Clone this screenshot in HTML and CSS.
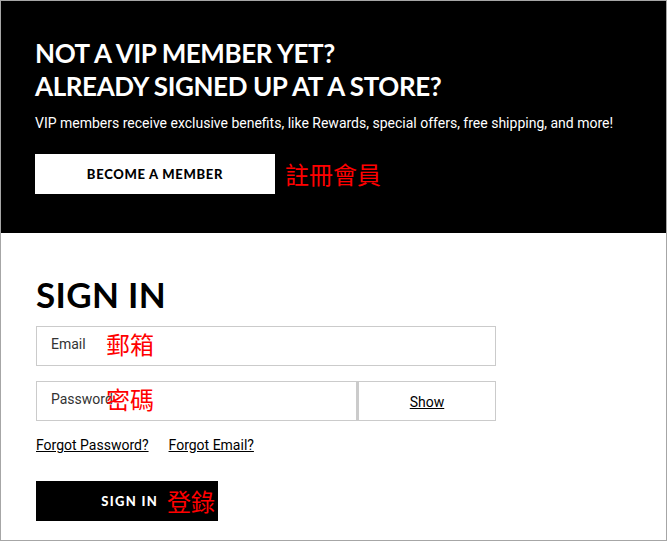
FILE: index.html
```html
<!doctype html>
<html>

<head>
    <meta charset="UTF-8" />
    <meta name="viewport" content="width=device-width, initial-scale=1.0" />
    <link rel="stylesheet" href="styles.css">
</head>

<body>
    <div class="frame">
        <section class="promo">
            <h2 class="promo__title">NOT A VIP MEMBER YET?<br>ALREADY SIGNED UP AT A STORE?</h2>
            <p class="promo__text">VIP members receive exclusive benefits, like Rewards, special offers, free shipping, and more!</p>
            <div class="promo__actions">
                <button class="btn btn--light">BECOME A MEMBER</button>
                <span class="note note--inline">註冊會員</span>
            </div>
        </section>
        <section class="signin">
            <h1 class="signin__title">SIGN IN</h1>
            <form class="signin__form">
                <label class="field">
                    <span class="field__label">Email</span>
                    <span class="note note--field">郵箱</span>
                </label>
                <div class="field-row">
                    <label class="field field--grow">
                        <span class="field__label">Password</span>
                        <span class="note note--field">密碼</span>
                    </label>
                    <a class="field__show" href="#">Show</a>
                </div>
                <div class="links">
                    <a href="#">Forgot Password?</a>
                    <a href="#">Forgot Email?</a>
                </div>
                <button class="btn btn--dark" type="button">
                    <span class="btn__text">SIGN IN</span>
                    <span class="note">登錄</span>
                </button>
            </form>
        </section>
    </div>
</body>

</html>
```

FILE: styles.css
```css
* {
    margin: 0;
    padding: 0;
    box-sizing: border-box;
}

body {
    background-color: #fff;
    color: #000;
    font-family: Roboto, "Liberation Sans", sans-serif;
    font-size: 14px;
}

a {
    color: inherit;
}

.frame {
    width: 667px;
    height: 541px;
    border: 1px solid #a6a6a6;
    overflow: hidden;
}

.promo {
    background-color: #000;
    color: #fff;
    height: 232px;
    padding: 36px 34px 0;
}

.promo__title {
    font-family: Lato, "DejaVu Sans", sans-serif;
    font-weight: 700;
    font-size: 26px;
    line-height: 33px;
    letter-spacing: -0.4px;
}

.promo__text {
    margin-top: 10px;
    font-size: 14px;
    line-height: 20px;
}

.promo__actions {
    display: flex;
    align-items: center;
    margin-top: 21px;
}

.btn {
    border: none;
    height: 40px;
    font-family: Lato, "DejaVu Sans", sans-serif;
    font-weight: 900;
    font-size: 13px;
    letter-spacing: 0.7px;
    cursor: pointer;
}

.btn--light {
    background-color: #fff;
    color: #000;
    width: 240px;
}

.note {
    color: #f00;
    font-family: "Noto Sans CJK TC", sans-serif;
    font-size: 24px;
    line-height: 1;
    font-weight: 400;
    letter-spacing: 0;
}

.note--inline {
    margin-left: 10px;
}

.signin {
    padding: 41px 35px 0;
}

.signin__title {
    font-family: Lato, "DejaVu Sans", sans-serif;
    font-weight: 700;
    font-size: 35px;
    line-height: 40px;
    letter-spacing: 0.3px;
}

.signin__form {
    margin-top: 12px;
    width: 460px;
}

.field {
    position: relative;
    display: block;
    height: 40px;
    border: 1px solid #cbcbcb;
    padding: 9px 0 0 14px;
}

.field__label {
    color: #333;
    font-size: 14px;
}

.note--field {
    position: absolute;
    left: 69px;
    top: 5px;
}

.field-row {
    display: flex;
    margin-top: 15px;
}

.field--grow {
    flex: 1;
}

.field__show {
    width: 139px;
    height: 40px;
    border: 1px solid #cbcbcb;
    border-left: 2px solid #cbcbcb;
    display: flex;
    align-items: center;
    justify-content: center;
    padding-top: 2px;
}

.links {
    display: flex;
    gap: 20px;
    margin-top: 16px;
    line-height: 16px;
}

.btn--dark {
    margin-top: 28px;
    background-color: #000;
    color: #fff;
    width: 182px;
    display: flex;
    align-items: center;
    justify-content: flex-end;
    gap: 9px;
    padding-right: 3px;
    letter-spacing: 1.3px;
}
```
